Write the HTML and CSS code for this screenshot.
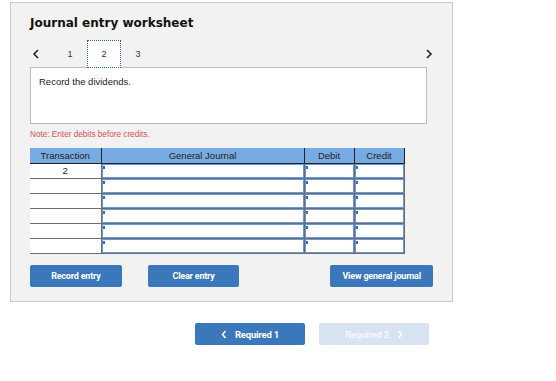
FILE: index.html
```html
<!DOCTYPE html>
<html lang="en">

<head>
    <meta charset="UTF-8">
    <meta name="viewport" content="width=device-width, initial-scale=1.0">
    <title>Journal entry worksheet</title>
    <link rel="stylesheet" href="styles.css">
</head>

<body>
    <div class="panel">
        <h1 class="title">Journal entry worksheet</h1>

        <div class="tabs">
            <span class="arrow">
                <svg width="8" height="10" viewBox="0 0 8 10"><path d="M6 1 L2 5 L6 9" fill="none" stroke="#222" stroke-width="1.6"/></svg>
            </span>
            <ul class="steps">
                <li>1</li>
                <li class="active">2</li>
                <li>3</li>
            </ul>
            <span class="arrow right">
                <svg width="8" height="10" viewBox="0 0 8 10"><path d="M2 1 L6 5 L2 9" fill="none" stroke="#222" stroke-width="1.6"/></svg>
            </span>
        </div>

        <div class="question">Record the dividends.</div>

        <p class="note">Note: Enter debits before credits.</p>

        <table class="journal">
            <thead>
                <tr>
                    <th class="c-tr">Transaction</th>
                    <th class="c-gj">General Journal</th>
                    <th class="c-num">Debit</th>
                    <th class="c-num">Credit</th>
                </tr>
            </thead>
            <tbody>
                <tr>
                    <td class="c-tr">2</td>
                    <td><div class="cell"></div></td>
                    <td><div class="cell"></div></td>
                    <td><div class="cell"></div></td>
                </tr>
                <tr>
                    <td class="c-tr"></td>
                    <td><div class="cell"></div></td>
                    <td><div class="cell"></div></td>
                    <td><div class="cell"></div></td>
                </tr>
                <tr>
                    <td class="c-tr"></td>
                    <td><div class="cell"></div></td>
                    <td><div class="cell"></div></td>
                    <td><div class="cell"></div></td>
                </tr>
                <tr>
                    <td class="c-tr"></td>
                    <td><div class="cell"></div></td>
                    <td><div class="cell"></div></td>
                    <td><div class="cell"></div></td>
                </tr>
                <tr>
                    <td class="c-tr"></td>
                    <td><div class="cell"></div></td>
                    <td><div class="cell"></div></td>
                    <td><div class="cell"></div></td>
                </tr>
                <tr>
                    <td class="c-tr"></td>
                    <td><div class="cell"></div></td>
                    <td><div class="cell"></div></td>
                    <td><div class="cell"></div></td>
                </tr>
            </tbody>
        </table>

        <div class="actions">
            <button class="btn">Record entry</button>
            <button class="btn">Clear entry</button>
            <button class="btn wide">View general journal</button>
        </div>
    </div>

    <div class="nav">
        <button class="btn big">
            <svg width="6" height="9" viewBox="0 0 6 9"><path d="M4.5 1 L1.5 4.5 L4.5 8" fill="none" stroke="#fff" stroke-width="1.6"/></svg>
            Required 1
        </button>
        <button class="btn big disabled">
            Required 2
            <svg width="6" height="9" viewBox="0 0 6 9"><path d="M1.5 1 L4.5 4.5 L1.5 8" fill="none" stroke="#fff" stroke-width="1.6"/></svg>
        </button>
    </div>
</body>

</html>
```

FILE: styles.css
```css
* {
    margin: 0;
    padding: 0;
    list-style: none;
    box-sizing: border-box;
}

body {
    font-family: "Liberation Sans", Arial, sans-serif;
    color: #222;
    background: #fff;
}

.panel {
    margin: 2px 0 0 10px;
    width: 443px;
    height: 300px;
    padding: 0 19px;
    background: #f2f2f2;
    border: 1px solid #c8c8c8;
}

.title {
    font-family: "DejaVu Sans", Verdana, sans-serif;
    font-size: 12px;
    font-weight: bold;
    color: #111;
    margin-top: 12px;
    line-height: 16px;
}

.tabs {
    display: flex;
    align-items: center;
    height: 28px;
    margin-top: 9px;
    margin-bottom: -1px;
    position: relative;
    z-index: 1;
}

.arrow {
    width: 23px;
    display: flex;
    align-items: center;
    padding-left: 2px;
}

.arrow.right {
    margin-left: auto;
    width: 10px;
}

.steps {
    display: flex;
    height: 100%;
}

.steps li {
    width: 34px;
    height: 28px;
    font-size: 9px;
    display: flex;
    align-items: center;
    justify-content: center;
    color: #333;
}

.steps li.active {
    background: #fff;
    border: 1px dotted #2f5fa8;
}

.question {
    width: 397px;
    height: 57px;
    background: #fff;
    border: 1px solid #bcbcbc;
    padding: 8px 8px;
    font-size: 9.5px;
    color: #222;
}

.note {
    font-size: 8.2px;
    color: #d9534f;
    margin-top: 3px;
    height: 16px;
    line-height: 16px;
}

.journal {
    margin-top: 5px;
    border-collapse: collapse;
    width: 374px;
    table-layout: fixed;
}

.journal th {
    background: #78abe3;
    font-size: 9.5px;
    font-weight: normal;
    height: 15px;
    padding: 0;
    color: #222;
    border-left: 1px solid #222;
    border-right: 1px solid #222;
    border-bottom: 1px solid #222;
}

.journal th:first-child {
    border-left: none;
}

.journal .c-tr {
    width: 71px;
}

.journal .c-gj {
    width: 203px;
}

.journal .c-num {
    width: 50px;
}

.journal td {
    height: 14px;
    line-height: 13px;
    padding: 0;
    vertical-align: top;
    background: #fff;
    border-bottom: 1px solid #6d6d6d;
    border-right: 1px solid #6d6d6d;
    font-size: 9.5px;
    text-align: center;
}

.cell {
    height: 14px;
    border: 1px solid #6a98d6;
    position: relative;
}

.cell::before {
    content: "";
    position: absolute;
    left: 0;
    top: 1px;
    width: 2px;
    height: 3px;
    background: #2f6fc2;
}

.actions {
    display: flex;
    margin-top: 11px;
}

.btn {
    font-family: Roboto, "Liberation Sans", sans-serif;
    font-size: 9px;
    font-weight: bold;
    letter-spacing: -0.2px;
    color: #fff;
    background: #3a77bb;
    border: none;
    border-radius: 2px;
    width: 92px;
    height: 22px;
}

.actions .btn + .btn {
    margin-left: 26px;
}

.actions .btn.wide {
    width: 103px;
    margin-left: 91px;
}

.nav {
    display: flex;
    margin: 21px 0 0 195px;
}

.btn.big {
    width: 110px;
    font-size: 9.5px;
    display: flex;
    align-items: center;
    justify-content: center;
    gap: 8px;
}

.btn.big + .btn.big {
    margin-left: 14px;
}

.btn.disabled {
    background: #d7e3f1;
    color: #f4f8fc;
}
```
